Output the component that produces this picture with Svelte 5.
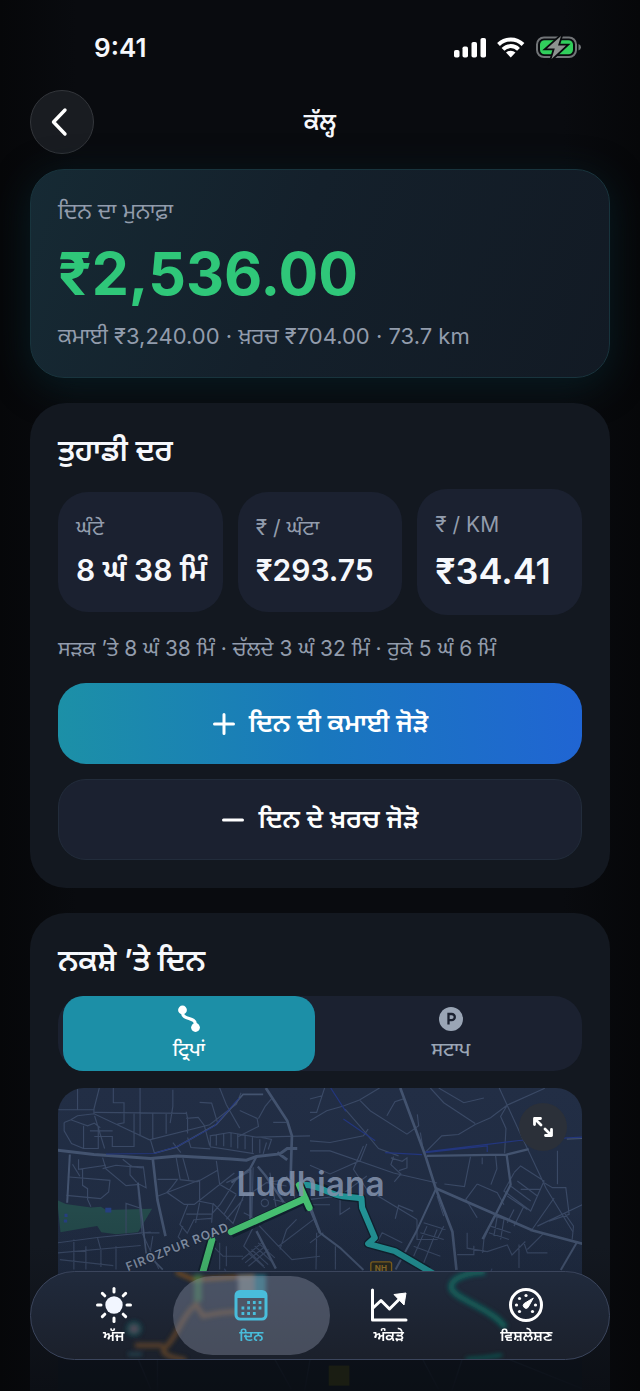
<script>
  const stats = [
    { label: 'ਘੰਟੇ', value: '8 ਘੰ 38 ਮਿੰ' },
    { label: '₹ / ਘੰਟਾ', value: '₹293.75' },
    { label: '₹ / KM', value: '₹34.41', large: true }
  ];
  const rays = [0, 45, 90, 135, 180, 225, 270, 315];
  let view = $state('trips');
</script>

<div class="page">
  <div class="status">
    <span class="clock">9:41</span>
    <svg class="signals" width="130" height="24" viewBox="0 0 130 24" aria-hidden="true">
      <g fill="#fff">
        <rect x="4" y="15" width="5.5" height="7.500" rx="1.800" />
        <rect x="12.500" y="11.500" width="5.500" height="11" rx="1.800" />
        <rect x="21.500" y="7" width="5.500" height="15.500" rx="1.800" />
        <rect x="30.500" y="3" width="5.500" height="19.500" rx="1.800" />
      </g>
      <g fill="none" stroke="#fff" stroke-width="4">
        <path d="M48.500 9.500a17.500 17.500 0 0 1 24.500 0" />
        <path d="M53 14.300a11 11 0 0 1 15.500 0" />
      </g>
      <path d="M56 17.600a7 7 0 0 1 9.500 0l-4.750 4.900z" fill="#fff" />
      <rect x="87" y="2.500" width="39" height="19.500" rx="7" fill="none" stroke="#717477" stroke-width="2" />
      <path d="M128.500 9v6.500q2.500-1 2.500-3.250T128.500 9z" fill="#717477" />
      <rect x="90" y="5.300" width="33" height="14" rx="4.500" fill="#31cf5c" />
      <path d="M111 1 97 13.500h7.800L101.500 24 116 10.500h-8z" fill="#8d9290" stroke="#090b0e" stroke-width="3.600" paint-order="stroke" />
    </svg>
  </div>

  <header>
    <button class="back" aria-label="ਪਿੱਛੇ">
      <svg width="32" height="32" viewBox="0 0 32 32"><path d="M21 4 9.500 16 21 28" fill="none" stroke="#fff" stroke-width="3.400" stroke-linecap="round" stroke-linejoin="round" /></svg>
    </button>
    <h1>ਕੱਲ੍ਹ</h1>
  </header>

  <main>
    <section class="hero">
      <p class="note">ਦਿਨ ਦਾ ਮੁਨਾਫ਼ਾ</p>
      <p class="profit">₹2,536.00</p>
      <p class="note">ਕਮਾਈ ₹3,240.00 · ਖ਼ਰਚ ₹704.00 · 73.7 km</p>
    </section>

    <section class="card">
      <h2>ਤੁਹਾਡੀ ਦਰ</h2>
      <div class="stats">
        {#each stats as s}
          <div class="stat" class:large={s.large}>
            <span class="label">{s.label}</span>
            <strong>{s.value}</strong>
          </div>
        {/each}
      </div>
      <p class="note road">ਸੜਕ ’ਤੇ 8 ਘੰ 38 ਮਿੰ · ਚੱਲਦੇ 3 ਘੰ 32 ਮਿੰ · ਰੁਕੇ 5 ਘੰ 6 ਮਿੰ</p>
      <div class="actions">
        <button class="action primary">
          <svg width="24" height="24" viewBox="0 0 24 24" aria-hidden="true"><path d="M2.500 12h19M12 2.500v19" /></svg>
          <span>ਦਿਨ ਦੀ ਕਮਾਈ ਜੋੜੋ</span>
        </button>
        <button class="action">
          <svg width="24" height="24" viewBox="0 0 24 24" aria-hidden="true"><path d="M2.500 12h19" /></svg>
          <span>ਦਿਨ ਦੇ ਖ਼ਰਚ ਜੋੜੋ</span>
        </button>
      </div>
    </section>

    <section class="card mapcard">
      <h2>ਨਕਸ਼ੇ ’ਤੇ ਦਿਨ</h2>
      <div class="segments">
        <button class:active={view === 'trips'} onclick={() => (view = 'trips')}>
          <svg width="28" height="28" viewBox="0 0 28 28" aria-hidden="true">
            <path d="M7.500 5.500v2.500c0 7 13 4 13 11v3.500" fill="none" stroke="currentColor" stroke-width="3" />
            <circle cx="7.500" cy="5" r="4.400" fill="currentColor" /><circle cx="20.500" cy="22.500" r="4.400" fill="currentColor" />
          </svg>
          ਟ੍ਰਿਪਾਂ
        </button>
        <button class:active={view === 'stops'} onclick={() => (view = 'stops')}>
          <svg width="28" height="28" viewBox="0 0 28 28" aria-hidden="true">
            <circle cx="14" cy="14" r="12" fill="currentColor" />
            <path d="M11.500 19.500v-10.500h3.200a3 3 0 0 1 0 6.200h-3.200" fill="none" stroke="#1b2130" stroke-width="2.300" />
          </svg>
          ਸਟਾਪ
        </button>
      </div>

      <div class="map">
        <svg class="streets" viewBox="0 0 1572 906" preserveAspectRatio="xMidYMin slice" aria-hidden="true">
          <defs>
            <linearGradient id="land" x1="0" y1="0" x2="0" y2="1"><stop offset="0" stop-color="#222e45" /><stop offset=".6" stop-color="#1f2b41" /><stop offset="1" stop-color="#0e131d" /></linearGradient>
            <linearGradient id="dusk" x1="0" y1="0" x2="0" y2="1"><stop offset="0" stop-color="#0b0e15" stop-opacity="0" /><stop offset="1" stop-color="#0b0e15" stop-opacity=".94" /></linearGradient>
          </defs>
          <rect width="1572" height="906" fill="url(#land)" />

          <g transform="translate(-54 -27)" fill="none" stroke="#3a4965" stroke-width="3.500">
            <path d="M54 362 80 374l75 10 30-2 15 10 138-4-42 70-66 6-44-6-12-18-50 8-60 10z" fill="#244a4b" stroke="none" />
            <path d="M198 385h18v14h-18zM76 403h9v10h-9zM74 420h10v9h-10z" fill="#263f82" stroke="none" />
            <path d="M54 92h112M166 100l275 3M180 27 164 90l0 14 166 78 180-45 80-62 14-34M166 110l30 98M115 27v64M95 122l20-12 50-6M75 130l20-8 50 18 20-8 18 14M75 130v25l22 38 36 15M133 140v68h44v-68M152 155h68M165 172h54v30h65v-98M222 27v44h32v60l-20 4M302 27v144M340 100v78M380 102v62M400 32v50l-8 50M440 98l4 20v45M480 70l36 2 18 60M440 118l36-3 18 24 16 60M510 170l60-10 80 14 160-4M512 170v33l130 20M530 165v34M552 163v38M574 162v42M594 164v44M616 166v44M638 172v48M660 180v42M680 190l-10 34M540 27l20 50 40 70M600 94l52 24 4 24-60 30M656 118l20-36 20-24M700 130h40M665 175l30 6-10 30M333 182l12 40M444 175l10 30 58 4M400 190l24 30" />
            <path d="M90 293l122 10-4 35-24 20-102-10M118 240v30l82-12M100 255l22 36M130 268v50l15 10v32l10 22M190 235l10 34 60 50 40-4 20 10-8-62-40-2v26l20 22M190 268l40-10 80 8M250 240l30 24M410 235l12 66 52 6 60-34M430 236l18 66M354 300h60l-18 24-14 15 52 36 30 0 120-94M350 352l130-50M480 302v64l40 8-4 56M530 245l10 70 50 30M560 310l56-26M440 404h76l26-30 52-80 34-16M445 375l-24 60 22 26 20-40 52-4M480 370l-12 60M520 372l60 60 34-90M560 420l50-60M590 345l-36 58" />
            <path d="M294 310l14 150 50 108M308 388l-48-16v90M54 490l120-16 160-16M54 520l250-22M104 480v90M140 500v70M175 476l10 36v50M62 540l160 18M230 500v70M300 460l60 0M340 470l-8 50M430 440l-14 32 30 34M640 264l-4 160M664 370a11 11 0 1 1 0 1M620 350l60-40 60-10M680 310l60 10M690 280l20 110M740 290l30 80M700 360l40 10M612 400l60 30 60-30M650 430l66 70 110-84M642 440l-30 60 60 60M625 520l50 45M635 510l50 45M645 500l50 45M655 490l50 45M606 540l60-50M616 550l60-50M626 560l60-50M520 500l30 30h60M540 490v80M560 500v60M716 500l40 40 84-10M720 510l20-60 30-30" />
          </g>
          <g transform="translate(-54 -27)" fill="none" stroke="#43536f">
            <path d="M92 226 84 370" stroke-width="6" />
            <path d="M54 213l110 13 170 12 80-8 160 9 46 4 30-11 70-8 22-16h30M712 220l30 22" stroke-width="9" />
            <path d="M340 238l14 124 24 108" stroke-width="8" /><path d="M296 310l24 210 50 50" stroke-width="5" />
            <path d="M650 232l-20 38-55 40M632 270v150M654 262l22 26 55 80M650 455l58 112" stroke-width="7" />
            <path d="M678 27l64 98 14 45-4 130M795 340l45 120" stroke-width="8" />
            <path d="M344 222l66-18 120-68 80-90h60" stroke-width="5" />
          </g>
          <path d="M146 197l144-1 70-22 110-60 74-84" fill="none" stroke="#23367e" stroke-width="3" />

          <g transform="translate(756 -27)" fill="none" stroke="#3a4965" stroke-width="3.500">
            <path d="M0 100h20l24-74M0 60l36-10M0 125l50-30 50-14 48-18 60-36M0 185l60 5 100-20 14-20M105 90l50 58 50 60 60 22M150 65l30 30 110 70 35-25-4-34M230 110l24-42 30-10M360 27l40 44 94 62M385 27l75 44 60-14M494 136l-50 30-50 4-50 50M494 136l46-20 50-38 112-50M566 27l60 130 80 170 80 130M590 78l-20 34 16 36-4 74M0 215h60l190 66 130 30M0 258l60 26 90-40 20-50M160 200l-30 70 40 60 150 90M250 232l-8 24 30 28-20 24M242 236l34 10 14-10v30l-24 8M170 290l-80 60-90 10M330 160l10 60M480 232l-18 90-60-8M555 228l4 40-18 48M515 235v20M610 280l20-20 70 45-40 90-80-60 30-54M600 320l60 45M620 305l60 45M590 350l60 40" />
            <path d="M500 314l-34 46 34 55M500 314l60 26 20 36M380 350l20 60M0 376l60 0M90 345v60l30-20M255 418l10-40 44 18M320 420v60l60 0 20-40M340 430l65 20M330 460l70 20M310 500l80 30M350 440l-40 90M380 450l-40 100M520 480l30-70 50 14M560 410l-10 60M580 420l-10 60M540 440l60 20M535 460l60 20M440 525h50v-26M470 460v46l60 10 60-20 14 30 40-40M520 480l-4 40M640 490l10 30h60M625 495v70M700 460l-50 50M180 480l110 60M200 490l16-30 60 30M20 460l-2 110M76 500v70M0 490l40-30M630 330h60M740 215v100M700 310l25 15h40l10 80-60 20M680 440l136-65M660 456l70-100M760 400l28 40-4 40M610 440l30-60M590 430l20-40" />
            <path d="M345 220l185-20v18M100 120l95 65M62 27l45 70M225 220l110 6M345 218l280-34 190-10" stroke="#23367e" />
            <path d="M768 180l48-2" stroke="#43536f" />
          </g>
          <g transform="translate(756 -27)" fill="none" stroke="#43536f" stroke-width="8">
            <path d="M270 27l76 205 30 95 50 130 12 114" />
            <path d="M376 327l180 78 110 48 150 40" />
            <path d="M350 230l238-4 66-16M588 226l12 90-44 88-40 75" stroke-width="7" />
            <path d="M376 330l-60 130-60 110" stroke-width="6" />
            <path d="M800 485l-50 86" stroke-width="6" />
            <path d="M0 390l30 70 60 45 70 66" stroke-width="6" />
          </g>

          <g fill="none" stroke="#314060" stroke-width="4">
            <path d="M0 620l200 90 80 190M300 560v346M500 540l200 360M800 560l-60 346M960 560l180 340M1300 540l-120 366M1572 600l-300 180 300 120M0 800h900M1000 700l572-60" />
          </g>

          <g fill="none" stroke-linejoin="round">
            <path d="M754 291h10c40 8 65 28 90 33l56 6 2 28 38 90-20 18 80 22 100 58" stroke="#10202e" stroke-width="26" />
            <path d="M724 288l30 3c40 8 65 28 100 33l56 6 2 28 38 90-20 18 80 22 120 70" stroke="#229396" stroke-width="18" />
            <path d="M435 552l28-98M520 434l222-102M722 286l34 78" stroke="#10202e" stroke-width="30" />
            <path d="M433 560l30-106M520 430l222-100M724 290l30 68" stroke="#46bf71" stroke-width="20" stroke-linecap="round" />
          </g>
          <g font-family="Inter, sans-serif">
            <text x="536" y="322" font-size="100" font-weight="600" fill="#8190aa" fill-opacity=".9">Ludhiana</text>
            <text transform="translate(212 548) rotate(-22)" font-size="36" font-weight="600" letter-spacing="3" fill="#8592a7" stroke="#1b273b" stroke-width="6" paint-order="stroke">FIROZPUR ROAD</text>
            <rect x="938" y="520" width="62" height="44" rx="6" fill="#29291f" stroke="#87651d" stroke-width="4" />
            <text x="950" y="548" font-size="24" font-weight="700" fill="#93702a">NH</text>
          </g>
          <rect y="360" width="1572" height="200" fill="url(#dusk)" opacity=".15" />
          <rect y="550" width="1572" height="356" fill="url(#dusk)" />
          <rect y="800" width="1572" height="106" fill="#0c1017" opacity=".6" />
          <rect x="812" y="830" width="62" height="60" fill="#242610" opacity=".6" />
        </svg>
        <button class="expand" aria-label="ਨਕਸ਼ਾ ਵੱਡਾ ਕਰੋ">
          <svg width="24" height="24" viewBox="0 0 24 24"><g fill="none" stroke="#fff" stroke-width="2.800" stroke-linecap="round" stroke-linejoin="round"><path d="M3.500 3.500l6.500 6.500M20.500 20.500l-6.500-6.500M3.500 9.500v-6h6M20.500 14.500v6h-6" /></g></svg>
        </button>
      </div>
    </section>
  </main>

  <nav>
    <svg class="glass" viewBox="0 0 578 89" preserveAspectRatio="none" aria-hidden="true">
      <defs><filter id="soft" x="-20%" y="-20%" width="140%" height="140%"><feGaussianBlur stdDeviation="2" /></filter></defs>
      <g fill="none" filter="url(#soft)">
        <path d="M145 0l18 8 60-4" stroke="#8b5416" stroke-width="3" />
        <path d="M232 42q-30-4-60 3l-7-12C150 45 145 70 133 78q-4 8 22 12M104 75h28" stroke="#8a5925" stroke-width="5" opacity=".55" />
        <path d="M167 2v28" stroke="#3f9a50" stroke-width="8" opacity=".5" />
        <path d="M454 0C435 0 416 8 421 18S465 40 474 57" stroke="#0b7668" stroke-width="6" opacity=".7" />
        <path d="M435 89q20-1 36-4" stroke="#0b7668" stroke-width="2" />
        <circle cx="103" cy="58" r="8" fill="#175459" opacity=".7" /><circle cx="103" cy="58" r="4" fill="#6c4e60" opacity=".7" />
        <path d="M207 3h16v20h-16z" fill="#8a9594" opacity=".7" /><path d="M223 3h12v20h-12z" fill="#2c8495" opacity=".8" />
        <path d="M97 84h14" stroke="#2f6470" stroke-width="3" opacity=".6" />
      </g>
    </svg>
    <a href="#today">
      <svg width="40" height="40" viewBox="0 0 40 40" aria-hidden="true">
        <circle cx="20" cy="20" r="8.700" fill="#f2f6ff" />
        {#each rays as r}<path d="M20 3.500v3.500" transform="rotate({r} 20 20)" stroke="#fff" stroke-width="3" stroke-linecap="round" />{/each}
      </svg>
      ਅੱਜ
    </a>
    <a href="#day" class="current" aria-current="page">
      <svg width="40" height="40" viewBox="0 0 40 40" aria-hidden="true">
        <rect x="5" y="12" width="30" height="22" rx="3" fill="#4e5666" />
        <path d="M9 5h22a5.500 5.500 0 0 1 5.500 5.500v19.500a5.500 5.500 0 0 1-5.500 5.500H9A5.500 5.500 0 0 1 3.500 30V10.500A5.500 5.500 0 0 1 9 5zM6.500 13v16.500A3.200 3.200 0 0 0 9.700 32.700h20.600a3.200 3.200 0 0 0 3.200-3.200V13z" fill="currentColor" fill-rule="evenodd" />
        <g stroke="currentColor" stroke-width="2.800" stroke-dasharray="2.800 2.900"><path d="M16.200 17.500h15M10.500 23h20M10.500 28.500h14.200" /></g>
      </svg>
      ਦਿਨ
    </a>
    <a href="#stats">
      <svg width="40" height="40" viewBox="0 0 40 40" aria-hidden="true">
        <path d="M3.500 5v30H37M4 23l8-7.500 8.500 8.500 11-11" fill="none" stroke="#fff" stroke-width="3" stroke-linecap="round" stroke-linejoin="round" />
        <path d="M25 9.500 37 8l-2 12z" fill="#fff" stroke="#fff" stroke-linejoin="round" />
      </svg>
      ਅੰਕੜੇ
    </a>
    <a href="#analysis">
      <svg width="40" height="40" viewBox="0 0 40 40" aria-hidden="true">
        <circle cx="20" cy="20" r="15.500" fill="none" stroke="#fff" stroke-width="3" />
        <path d="M27.300 13 22 22.500a2.700 2.700 0 1 1-3.800-4z" fill="#fff" stroke="#fff" stroke-linejoin="round" />
        <g fill="#fff"><circle cx="20" cy="10.500" r="1.600" /><circle cx="13.500" cy="13.500" r="1.600" /><circle cx="10.500" cy="20" r="1.600" /><circle cx="29.500" cy="20" r="1.600" /><circle cx="13.500" cy="26.500" r="1.600" /><circle cx="26.500" cy="26.500" r="1.600" /></g>
      </svg>
      ਵਿਸ਼ਲੇਸ਼ਣ
    </a>
  </nav>
</div>

<style>
  :global(body) { margin: 0; background: #08090d; }
  .page {
    min-height: 100vh;
    display: flex;
    flex-direction: column;
    position: relative;
    overflow: hidden;
    box-sizing: border-box;
    padding: 0 30px;
    background: linear-gradient(90deg, #060709, #090b0f 12%, #090b0f 88%, #060709);
    color: #f6f8fc;
    font-family: Inter, "Noto Sans Gurmukhi", "Noto Sans", sans-serif;
  }
  h1, h2, p { margin: 0; }
  button { border: 0; padding: 0; color: inherit; font: inherit; cursor: pointer; }
  svg { display: block; flex: none; }
  .status { height: 90px; display: flex; justify-content: space-between; align-items: center; padding: 4px 30px 0 64px; box-sizing: border-box; }
  .clock { font-size: 26px; font-weight: 600; }
  .signals { overflow: visible; }
  header { display: grid; grid-template-columns: 64px 1fr 64px; align-items: center; height: 64px; margin-bottom: 15px; }
  .back { width: 64px; height: 64px; border-radius: 50%; background: #191c21; border: 1px solid #33363b; display: grid; place-items: center; box-sizing: border-box; }
  .back svg { margin-right: 4px; }
  h1 { font-size: 24px; font-weight: 600; text-align: center; line-height: 36px; }
  main { flex: 1; display: flex; flex-direction: column; gap: 25px; }
  .hero {
    box-sizing: border-box;
    padding: 27px;
    border: 1px solid #18343d;
    border-radius: 34px;
    background: linear-gradient(110deg, #162a34, #14202b 45%, #121a24);
    box-shadow: 0 8px 36px #071b21;
    display: flex; flex-direction: column; gap: 18px;
  }
  .note { font-size: 22px; line-height: 28px; color: #929cac; white-space: nowrap; }
  .road { font-size: 21px; }
  .profit { font-size: 59px; line-height: 61px; font-weight: 700; color: #2fc779; }
  .card { background: #131820; border-radius: 36px; padding: 28px; display: flex; flex-direction: column; gap: 20px; position: relative; }
  h2 { font-size: 30px; line-height: 38px; font-weight: 600; }
  .stats { display: grid; grid-template-columns: repeat(3, minmax(0, 1fr)); gap: 15px; align-items: center; }
  .stat { background: #1b2130; border-radius: 30px; padding: 24px 18px; display: flex; flex-direction: column; gap: 12px; white-space: nowrap; }
  .label { font-size: 21px; line-height: 24px; color: #929cac; }
  .stat strong { font-size: 30px; line-height: 36px; font-weight: 600; }
  .large { gap: 14px; }
  .stat.large strong { font-size: 36px; line-height: 40px; }
  .actions { display: flex; flex-direction: column; gap: 15px; }
  .action { height: 81px; box-sizing: border-box; border-radius: 28px; border: 1px solid #222c3b; background: #1b2130; display: flex; justify-content: center; align-items: center; gap: 13px; font-size: 26px; font-weight: 600; color: #fff; }
  .action path { fill: none; stroke: #fff; stroke-width: 3; stroke-linecap: round; }
  .action span { padding-top: 2px; }
  .primary { border-width: 0; background: linear-gradient(90deg, #1c90a7, #1978bd 50%, #2065d3); }
  .mapcard { flex: 1; padding-bottom: 0; border-radius: 36px 36px 0 0; gap: 17px; background: linear-gradient(#131820 70%, #0c0f15); }
  .segments { display: grid; grid-template-columns: 1fr 1fr; background: #1b2130; border-radius: 28px; }
  .segments button { height: 75px; margin: 0 5px; border-radius: 20px; background: none; color: #9aa5b5; display: flex; flex-direction: column; align-items: center; justify-content: center; gap: 4px; font-size: 19px; line-height: 26px; font-weight: 500; }
  .segments .active { background: #1c8fa7; color: #fff; }
  .map { position: relative; flex: 1; min-height: 300px; border-radius: 26px 26px 0 0; overflow: hidden; }
  .streets { position: absolute; inset: 0; width: 100%; height: 100%; }
  .expand { position: absolute; top: 15px; right: 15px; width: 48px; height: 48px; border-radius: 50%; background: #2b3039; display: grid; place-items: center; }
  nav {
    position: fixed;
    left: 30px; right: 30px; bottom: 31px;
    height: 89px;
    box-sizing: border-box;
    padding: 4px 14px;
    display: grid;
    grid-template-columns: repeat(4, 1fr);
    border: 1px solid #3b455c;
    border-radius: 45px;
    overflow: hidden;
    background: linear-gradient(#202a3c, #1b202b);
  }
  .glass { position: absolute; inset: 0; width: 100%; height: 100%; }
  nav a { position: relative; display: flex; flex-direction: column; align-items: center; padding-top: 9px; color: #fff; text-decoration: none; font-size: 15px; font-weight: 600; line-height: 22px; }
  nav .current { color: #49bddb; margin: 0 -10px; border-radius: 40px; background: rgba(137, 145, 164, .4); }
</style>
